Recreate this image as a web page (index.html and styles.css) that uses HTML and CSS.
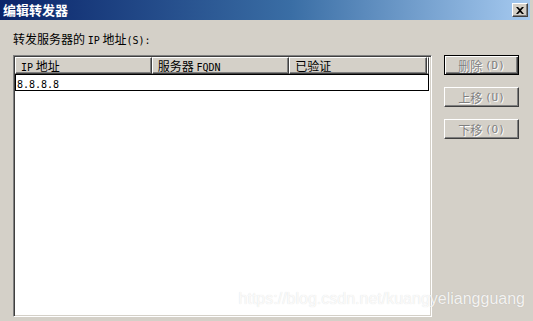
FILE: index.html
```html
<!DOCTYPE html>
<html lang="zh">
<head>
    <meta charset="utf-8">
    <title>编辑转发器</title>
    <link rel="stylesheet" href="styles.css">
</head>
<body>
    <div class="window">
        <div class="titlebar">
            <span class="title">编辑转发器</span>
            <span class="close">
                <svg width="8" height="7" viewBox="0 0 8 7">
                    <path d="M0 0h2l2 2 2-2h2L5 3.5 8 7H6L4 5 2 7H0l3-3.5z" fill="#000"/>
                </svg>
            </span>
        </div>

        <div class="content">
            <div class="label">转发服务器的 <span class="en">IP</span> 地址<span class="en">(S):</span></div>

            <div class="main">
                <div class="listview">
                    <div class="header">
                        <div class="col c1"><span class="en">IP</span> 地址</div>
                        <div class="col c2">服务器 <span class="en">FQDN</span></div>
                        <div class="col c3">已验证</div>
                        <div class="col rest"></div>
                    </div>
                    <div class="row"><span class="en">8.8.8.8</span></div>
                </div>

                <div class="buttons">
                    <div class="btn default">删除 <span class="en">(D)</span></div>
                    <div class="btn">上移 <span class="en">(U)</span></div>
                    <div class="btn">下移 <span class="en">(O)</span></div>
                </div>
            </div>
        </div>

        <div class="watermark">https://blog.csdn.net/kuangyeliangguang</div>
    </div>
</body>
</html>
```

FILE: styles.css
```css
body {
    margin: 0;
    background-color: #d4d0c8;
    font-family: "Noto Sans CJK SC", sans-serif;
    font-size: 12px;
    color: #000;
}

.en {
    font-family: "DejaVu Sans Mono", monospace;
    font-size: 10px;
}

.window {
    position: relative;
    width: 533px;
    height: 321px;
    background-color: #d4d0c8;
    overflow: hidden;
}

.titlebar {
    height: 20px;
    margin-right: 3px;
    background: linear-gradient(to right, #0a246a, #3a6ea5 55%, #a6caf0);
    display: flex;
    align-items: center;
    justify-content: space-between;
    padding: 0 2px 0 3px;
}

.title {
    color: #fff;
    font-weight: bold;
    font-size: 13px;
    line-height: 20px;
}

.close {
    width: 16px;
    height: 14px;
    box-sizing: border-box;
    background-color: #d4d0c8;
    border-top: 1px solid #fff;
    border-left: 1px solid #fff;
    border-right: 1px solid #404040;
    border-bottom: 1px solid #404040;
    box-shadow: inset -1px -1px 0 #808080;
    display: flex;
    align-items: center;
    justify-content: center;
}

.content {
    padding: 11px 14px 0 13px;
}

.label {
    line-height: 16px;
    height: 16px;
    margin-bottom: 8px;
}

.main {
    display: flex;
    gap: 12px;
}

.listview {
    width: 419px;
    height: 262px;
    box-sizing: border-box;
    background-color: #fff;
    border-top: 1px solid #808080;
    border-left: 1px solid #808080;
    border-right: 1px solid #fff;
    border-bottom: 1px solid #fff;
    box-shadow: inset 1px 1px 0 #404040, inset -1px -1px 0 #d4d0c8;
    padding: 1px 2px 0 1px;
}

.header {
    display: flex;
    height: 17px;
}

.col {
    box-sizing: border-box;
    height: 17px;
    background-color: #d4d0c8;
    border-top: 1px solid #fff;
    border-left: 1px solid #fff;
    border-right: 1px solid #404040;
    border-bottom: 1px solid #404040;
    box-shadow: inset -1px -1px 0 #808080;
    padding-left: 5px;
    line-height: 15px;
    white-space: nowrap;
}

.c1 { width: 137px; }
.c2 { width: 138px; }
.c3 { width: 138px; }
.rest { flex: 1; padding: 0; }

.row {
    height: 17px;
    box-sizing: border-box;
    border: 1px solid #000;
    line-height: 15px;
    padding-left: 1px;
}

.buttons {
    display: flex;
    flex-direction: column;
    gap: 12px;
}

.btn {
    width: 75px;
    height: 20px;
    box-sizing: border-box;
    background-color: #d4d0c8;
    border-top: 1px solid #fff;
    border-left: 1px solid #fff;
    border-right: 1px solid #404040;
    border-bottom: 1px solid #404040;
    box-shadow: inset -1px -1px 0 #808080;
    display: flex;
    align-items: center;
    justify-content: center;
    white-space: pre;
    color: #808080;
    text-shadow: 1px 1px 0 #fff;
}

.btn .en {
    font-size: 11px;
}

.btn.default {
    border: 1px solid #000;
    box-shadow: inset 1px 1px 0 #fff, inset -1px -1px 0 #404040, inset -2px -2px 0 #808080;
}

.watermark {
    position: absolute;
    right: 8px;
    bottom: 13px;
    font-family: "Liberation Sans", Arial, sans-serif;
    font-size: 16px;
    color: rgba(255, 255, 255, 0.85);
    text-shadow: 0 0 1px rgba(0, 0, 0, 0.15);
}
```
